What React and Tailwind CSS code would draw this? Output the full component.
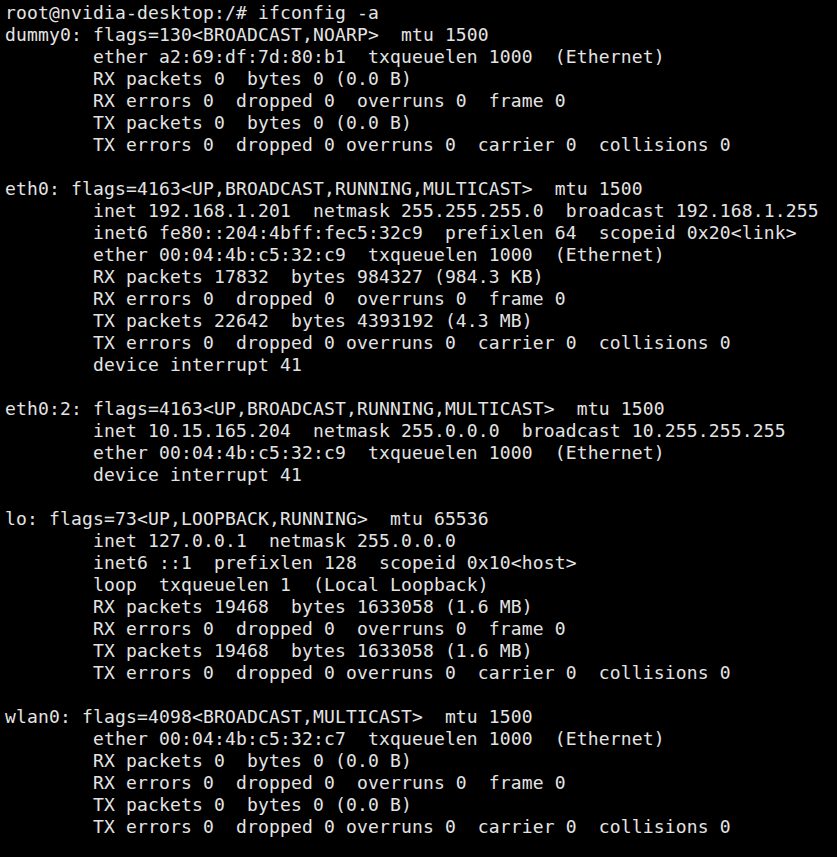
const lines = [
  "root@nvidia-desktop:/# ifconfig -a",
  "dummy0: flags=130<BROADCAST,NOARP>  mtu 1500",
  "        ether a2:69:df:7d:80:b1  txqueuelen 1000  (Ethernet)",
  "        RX packets 0  bytes 0 (0.0 B)",
  "        RX errors 0  dropped 0  overruns 0  frame 0",
  "        TX packets 0  bytes 0 (0.0 B)",
  "        TX errors 0  dropped 0 overruns 0  carrier 0  collisions 0",
  "",
  "eth0: flags=4163<UP,BROADCAST,RUNNING,MULTICAST>  mtu 1500",
  "        inet 192.168.1.201  netmask 255.255.255.0  broadcast 192.168.1.255",
  "        inet6 fe80::204:4bff:fec5:32c9  prefixlen 64  scopeid 0x20<link>",
  "        ether 00:04:4b:c5:32:c9  txqueuelen 1000  (Ethernet)",
  "        RX packets 17832  bytes 984327 (984.3 KB)",
  "        RX errors 0  dropped 0  overruns 0  frame 0",
  "        TX packets 22642  bytes 4393192 (4.3 MB)",
  "        TX errors 0  dropped 0 overruns 0  carrier 0  collisions 0",
  "        device interrupt 41",
  "",
  "eth0:2: flags=4163<UP,BROADCAST,RUNNING,MULTICAST>  mtu 1500",
  "        inet 10.15.165.204  netmask 255.0.0.0  broadcast 10.255.255.255",
  "        ether 00:04:4b:c5:32:c9  txqueuelen 1000  (Ethernet)",
  "        device interrupt 41",
  "",
  "lo: flags=73<UP,LOOPBACK,RUNNING>  mtu 65536",
  "        inet 127.0.0.1  netmask 255.0.0.0",
  "        inet6 ::1  prefixlen 128  scopeid 0x10<host>",
  "        loop  txqueuelen 1  (Local Loopback)",
  "        RX packets 19468  bytes 1633058 (1.6 MB)",
  "        RX errors 0  dropped 0  overruns 0  frame 0",
  "        TX packets 19468  bytes 1633058 (1.6 MB)",
  "        TX errors 0  dropped 0 overruns 0  carrier 0  collisions 0",
  "",
  "wlan0: flags=4098<BROADCAST,MULTICAST>  mtu 1500",
  "        ether 00:04:4b:c5:32:c7  txqueuelen 1000  (Ethernet)",
  "        RX packets 0  bytes 0 (0.0 B)",
  "        RX errors 0  dropped 0  overruns 0  frame 0",
  "        TX packets 0  bytes 0 (0.0 B)",
  "        TX errors 0  dropped 0 overruns 0  carrier 0  collisions 0",
];

export default function App() {
  return (
    <div className="w-[837px] h-[857px] bg-black overflow-hidden pl-[5px] pt-[2px]">
      <pre className="m-0 text-[18px] tracking-[0.16px] leading-[22px] text-[#e4e4e4] whitespace-pre font-['DejaVu_Sans_Mono',monospace]">
        {lines.map((l, i) => (
          <div key={i} className="h-[22px]">{l}</div>
        ))}
      </pre>
    </div>
  );
}
